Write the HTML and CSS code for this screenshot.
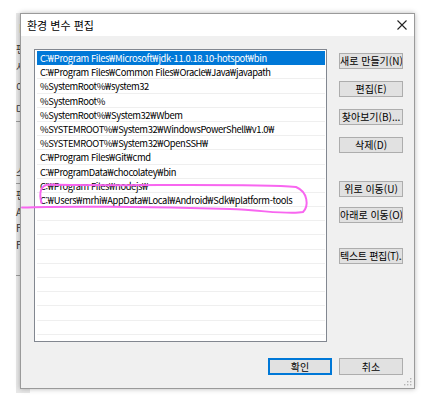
FILE: index.html
```html
<!DOCTYPE html>
<html lang="ko">
<head>
<meta charset="utf-8">
<link rel="stylesheet" href="styles.css">
</head>
<body>
<div class="desktop">
  <div class="bgwin">
    <span class="frag f1">ㅣ</span>
    <span class="frag f2">편</span>
    <span class="frag f3">사</span>
    <span class="frag f5">이</span>
    <span class="frag f6">대</span>
    <span class="hline l1"></span>
    <span class="frag f7">스</span>
    <span class="hline l2"></span>
    <span class="frag f8">편</span>
    <span class="frag f10">A</span>
    <span class="frag f11">F</span>
    <span class="frag f12">F</span>
    <span class="hline l3"></span>
  </div>

  <div class="dialog">
    <div class="titlebar">
      <span class="title">환경 변수 편집</span>
      <svg class="close" width="10" height="10" viewBox="0 0 10 10"><path d="M0.5 0.5 L9.5 9.5 M9.5 0.5 L0.5 9.5" stroke="#222" stroke-width="1.1" fill="none"/></svg>
    </div>
    <div class="body">
      <div class="main">
        <div class="list">
          <div class="row selected">C:<i>₩</i>Program Files<i>₩</i>Microsoft<i>₩</i>jdk-11.0.18.10-hotspot<i>₩</i>bin</div>
          <div class="row">C:<i>₩</i>Program Files<i>₩</i>Common Files<i>₩</i>Oracle<i>₩</i>Java<i>₩</i>javapath</div>
          <div class="row">%SystemRoot%<i>₩</i>system32</div>
          <div class="row">%SystemRoot%</div>
          <div class="row">%SystemRoot%<i>₩</i>System32<i>₩</i>Wbem</div>
          <div class="row">%SYSTEMROOT%<i>₩</i>System32<i>₩</i>WindowsPowerShell<i>₩</i>v1.0<i>₩</i></div>
          <div class="row">%SYSTEMROOT%<i>₩</i>System32<i>₩</i>OpenSSH<i>₩</i></div>
          <div class="row">C:<i>₩</i>Program Files<i>₩</i>Git<i>₩</i>cmd</div>
          <div class="row">C:<i>₩</i>ProgramData<i>₩</i>chocolatey<i>₩</i>bin</div>
          <div class="row">C:<i>₩</i>Program Files<i>₩</i>nodejs<i>₩</i></div>
          <div class="row">C:<i>₩</i>Users<i>₩</i>mrhi<i>₩</i>AppData<i>₩</i>Local<i>₩</i>Android<i>₩</i>Sdk<i>₩</i>platform-tools</div>
          <div class="row"></div>
          <div class="row"></div>
          <div class="row"></div>
          <div class="row"></div>
          <div class="row"></div>
          <div class="row"></div>
          <div class="row"></div>
          <div class="row"></div>
          <div class="row"></div>
          <div class="row"></div>
        </div>
        <div class="side">
          <button class="btn b-new">새로 만들기(N)</button>
          <button class="btn b-gap">편집(E)</button>
          <button class="btn b-gap">찾아보기(B)...</button>
          <button class="btn b-gap">삭제(D)</button>
          <button class="btn b-up">위로 이동(U)</button>
          <button class="btn b-down">아래로 이동(O)</button>
          <button class="btn b-text">텍스트 편집(T)...</button>
        </div>
      </div>
      <div class="footer">
        <button class="btn btn-default">확인</button>
        <button class="btn">취소</button>
      </div>
      <svg class="grip" width="8" height="8" viewBox="0 0 8 8">
        <rect x="6" y="0" width="1.4" height="1.4" fill="#b4b4b4"/>
        <rect x="3" y="3" width="1.4" height="1.4" fill="#b4b4b4"/>
        <rect x="6" y="3" width="1.4" height="1.4" fill="#b4b4b4"/>
        <rect x="0" y="6" width="1.4" height="1.4" fill="#b4b4b4"/>
        <rect x="3" y="6" width="1.4" height="1.4" fill="#b4b4b4"/>
        <rect x="6" y="6" width="1.4" height="1.4" fill="#b4b4b4"/>
      </svg>
    </div>
  </div>

  <svg class="annot" width="433" height="396" viewBox="0 0 433 396">
    <path d="M22 207.5 C60 206, 150 206.5, 230 209 C265 210.5, 290 215, 303 212 C309 206, 308 192, 296 187 C250 183, 120 186.5, 50 184.5 C40 184.5, 39 193, 41.5 203" stroke="#f866f0" stroke-width="2" fill="none" stroke-linecap="round"/>
  </svg>
</div>
</body>
</html>
```

FILE: styles.css
```css
* { box-sizing: border-box; }
html, body {
  margin: 0;
  padding: 0;
  background: #ffffff;
}
.desktop {
  position: relative;
  width: 433px;
  height: 396px;
  overflow: hidden;
  font-family: "Noto Sans CJK KR", "Noto Sans", sans-serif;
}
.bgwin {
  position: absolute;
  left: 16px;
  top: 13px;
  width: 14px;
  height: 380px;
  background: #e8e8e8;
}
.frag {
  position: absolute;
  left: 0;
  font-size: 10px;
  line-height: 11px;
  color: #333;
}
.f1 { top: 9px; }
.f2 { top: 30px; }
.f3 { top: 48px; }
.f5 { top: 68px; }
.f6 { top: 90px; }
.f7 { top: 153px; }
.f8 { top: 176px; }
.f10 { top: 193px; }
.f11 { top: 209px; }
.f12 { top: 226px; }
.hline {
  position: absolute;
  left: 0;
  width: 14px;
  height: 1px;
  background: #9a9a9a;
}
.l1 { top: 108px; }
.l2 { top: 170px; }
.l3 { top: 262px; }

.dialog {
  position: absolute;
  left: 20px;
  top: 13px;
  width: 395px;
  height: 376px;
  border: 1px solid #9a9a9a;
  background: #f0f0f0;
  box-shadow: 0 0 5px rgba(0, 0, 0, 0.28);
  display: flex;
  flex-direction: column;
}
.titlebar {
  height: 22px;
  background: #ffffff;
  display: flex;
  align-items: center;
  justify-content: space-between;
  padding: 0 6px 0 6px;
}
.title {
  font-size: 11px;
  color: #000;
}
.close {
  margin-right: 1px;
}
.body {
  position: relative;
  flex: 1;
  padding: 13px 11px 13px 13px;
  display: flex;
  flex-direction: column;
}
.main {
  display: flex;
  gap: 12px;
}
.list {
  width: 293px;
  height: 293px;
  background: #ffffff;
  border: 1px solid #828790;
  padding: 1px 1px 0 2px;
  overflow: hidden;
}
.row {
  height: 14.2px;
  line-height: 14px;
  font-size: 9.4px;
  letter-spacing: -0.4px;
  color: #000;
  padding-left: 3px;
  white-space: nowrap;
  border-bottom: 1px solid #efefef;
}
.row i {
  font-style: normal;
  font-family: "Noto Sans", sans-serif;
  font-size: 9px;
  letter-spacing: 0;
}
.row.selected {
  background: #0078d7;
  color: #fff;
  border-bottom-color: #0078d7;
}
.side {
  display: flex;
  flex-direction: column;
  padding-top: 4px;
}
.btn {
  width: 64px;
  height: 16px;
  padding: 0;
  margin: 0;
  background: #e1e1e1;
  border: 1px solid #adadad;
  font-family: "Noto Sans CJK KR", "Noto Sans", sans-serif;
  font-size: 10px;
  line-height: 14px;
  color: #000;
  white-space: nowrap;
  overflow: hidden;
}
.b-gap { margin-top: 12px; }
.b-up { margin-top: 28px; }
.b-down { margin-top: 10px; }
.b-text { margin-top: 25px; letter-spacing: -0.3px; }
.footer {
  margin-top: 16px;
  display: flex;
  justify-content: flex-end;
  gap: 7px;
}
.footer .btn {
  height: 17px;
}
.btn-default {
  border: 2px solid #0078d7;
}
.grip {
  position: absolute;
  right: 2px;
  bottom: 2px;
}
.annot {
  position: absolute;
  left: 0;
  top: 0;
  pointer-events: none;
}
```
